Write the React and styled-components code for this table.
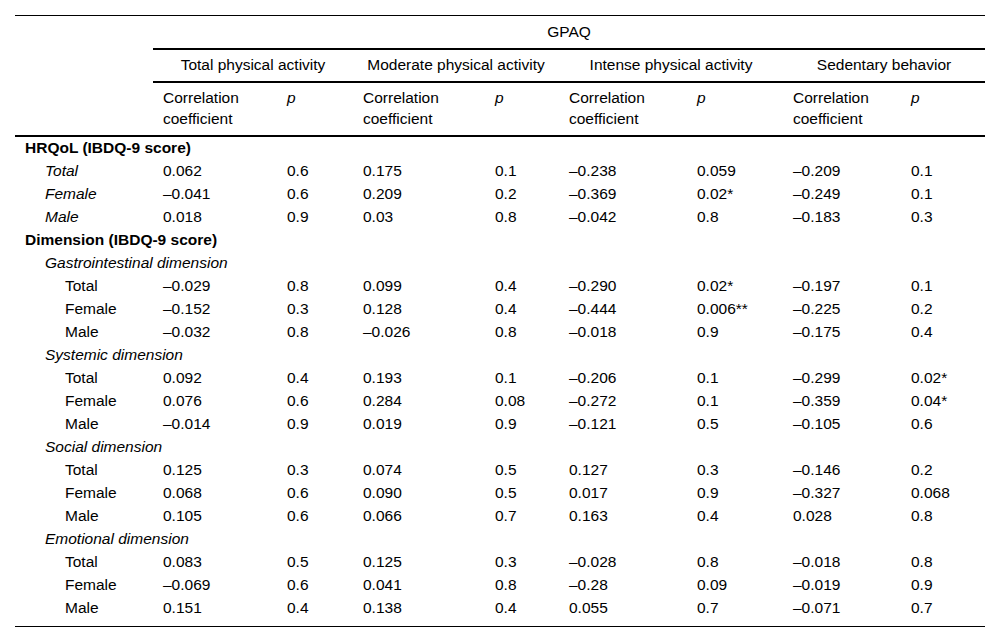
import React from 'react';
import styled, { createGlobalStyle } from 'styled-components';

const GlobalStyle = createGlobalStyle`
  html, body {
    margin: 0;
    padding: 0;
    background: #ffffff;
  }
  body {
    font-family: "Liberation Sans", Arial, sans-serif;
    color: #000;
  }
`;

const Page = styled.div`
  padding: 15px;
  width: 1000px;
  box-sizing: border-box;
`;

const Table = styled.table`
  width: 970px;
  border-collapse: collapse;
  table-layout: fixed;
  font-size: 15.5px;
  border-top: 1px solid #000;
  border-bottom: 1px solid #000;
`;

const HeadCell = styled.th`
  font-weight: 400;
  font-style: ${p => (p.$italic ? 'italic' : 'normal')};
  text-align: ${p => (p.$center ? 'center' : 'left')};
  vertical-align: top;
  line-height: 21px;
  padding: ${p => p.$pad || '4px 10px 6px'};
  border-bottom: 2px solid #000;
  white-space: nowrap;
`;

const Cell = styled.td`
  line-height: 21px;
  padding: 0 10px ${p => (p.$last ? '8px' : '2px')} 10px;
  white-space: nowrap;
  vertical-align: top;
`;

const LabelCell = styled(Cell)`
  padding-left: ${p => 10 + p.$level * 20}px;
  font-weight: ${p => (p.$bold ? 700 : 400)};
  font-style: ${p => (p.$italic ? 'italic' : 'normal')};
`;

const groups = [
  'Total physical activity',
  'Moderate physical activity',
  'Intense physical activity',
  'Sedentary behavior',
];

const widths = [138, 124, 76, 132, 74, 128, 96, 118, 84];

// kind: h = bold section, s = italic subgroup, r = value row
const rows = [
  { kind: 'h', label: 'HRQoL (IBDQ-9 score)' },
  { kind: 'r', level: 1, italic: true, label: 'Total', v: ['0.062', '0.6', '0.175', '0.1', '–0.238', '0.059', '–0.209', '0.1'] },
  { kind: 'r', level: 1, italic: true, label: 'Female', v: ['–0.041', '0.6', '0.209', '0.2', '–0.369', '0.02*', '–0.249', '0.1'] },
  { kind: 'r', level: 1, italic: true, label: 'Male', v: ['0.018', '0.9', '0.03', '0.8', '–0.042', '0.8', '–0.183', '0.3'] },
  { kind: 'h', label: 'Dimension (IBDQ-9 score)' },
  { kind: 's', label: 'Gastrointestinal dimension' },
  { kind: 'r', level: 2, label: 'Total', v: ['–0.029', '0.8', '0.099', '0.4', '–0.290', '0.02*', '–0.197', '0.1'] },
  { kind: 'r', level: 2, label: 'Female', v: ['–0.152', '0.3', '0.128', '0.4', '–0.444', '0.006**', '–0.225', '0.2'] },
  { kind: 'r', level: 2, label: 'Male', v: ['–0.032', '0.8', '–0.026', '0.8', '–0.018', '0.9', '–0.175', '0.4'] },
  { kind: 's', label: 'Systemic dimension' },
  { kind: 'r', level: 2, label: 'Total', v: ['0.092', '0.4', '0.193', '0.1', '–0.206', '0.1', '–0.299', '0.02*'] },
  { kind: 'r', level: 2, label: 'Female', v: ['0.076', '0.6', '0.284', '0.08', '–0.272', '0.1', '–0.359', '0.04*'] },
  { kind: 'r', level: 2, label: 'Male', v: ['–0.014', '0.9', '0.019', '0.9', '–0.121', '0.5', '–0.105', '0.6'] },
  { kind: 's', label: 'Social dimension' },
  { kind: 'r', level: 2, label: 'Total', v: ['0.125', '0.3', '0.074', '0.5', '0.127', '0.3', '–0.146', '0.2'] },
  { kind: 'r', level: 2, label: 'Female', v: ['0.068', '0.6', '0.090', '0.5', '0.017', '0.9', '–0.327', '0.068'] },
  { kind: 'r', level: 2, label: 'Male', v: ['0.105', '0.6', '0.066', '0.7', '0.163', '0.4', '0.028', '0.8'] },
  { kind: 's', label: 'Emotional dimension' },
  { kind: 'r', level: 2, label: 'Total', v: ['0.083', '0.5', '0.125', '0.3', '–0.028', '0.8', '–0.018', '0.8'] },
  { kind: 'r', level: 2, label: 'Female', v: ['–0.069', '0.6', '0.041', '0.8', '–0.28', '0.09', '–0.019', '0.9'] },
  { kind: 'r', level: 2, label: 'Male', v: ['0.151', '0.4', '0.138', '0.4', '0.055', '0.7', '–0.071', '0.7'] },
];

function BodyRow({ row, last }) {
  if (row.kind === 'h') {
    return (
      <tr>
        <LabelCell $level={0} $bold colSpan={9}>{row.label}</LabelCell>
      </tr>
    );
  }
  if (row.kind === 's') {
    return (
      <tr>
        <LabelCell $level={1} $italic colSpan={9}>{row.label}</LabelCell>
      </tr>
    );
  }
  return (
    <tr>
      <LabelCell $level={row.level} $italic={row.italic} $last={last}>{row.label}</LabelCell>
      {row.v.map((val, i) => (
        <Cell key={i} $last={last}>{val}</Cell>
      ))}
    </tr>
  );
}

export default function App() {
  return (
    <Page>
      <GlobalStyle />
      <Table>
        <colgroup>
          {widths.map((w, i) => (
            <col key={i} style={{ width: w }} />
          ))}
        </colgroup>
        <thead>
          <tr>
            <HeadCell rowSpan={3} />
            <HeadCell colSpan={8} $center $pad="4.5px 10px 6.5px">GPAQ</HeadCell>
          </tr>
          <tr>
            {groups.map(g => (
              <HeadCell key={g} colSpan={2} $center>{g}</HeadCell>
            ))}
          </tr>
          <tr>
            {groups.map(g => (
              <React.Fragment key={g}>
                <HeadCell>Correlation<br />coefficient</HeadCell>
                <HeadCell $italic>p</HeadCell>
              </React.Fragment>
            ))}
          </tr>
        </thead>
        <tbody>
          {rows.map((r, i) => (
            <BodyRow key={i} row={r} last={i === rows.length - 1} />
          ))}
        </tbody>
      </Table>
    </Page>
  );
}
